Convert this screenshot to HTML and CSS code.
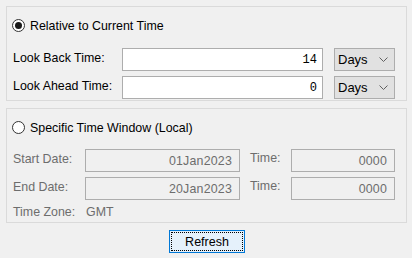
FILE: index.html
```html
<!DOCTYPE html>
<html>
<head>
<meta charset="utf-8">
<link rel="stylesheet" href="styles.css">
</head>
<body>
<div class="window">
  <section class="panel panel-rel">
    <div class="radio-row">
      <span class="radio checked"></span>
      <span class="radio-label">Relative to Current Time</span>
    </div>
    <div class="grid-rel">
      <span class="lbl">Look Back Time:</span>
      <div class="input mono">14</div>
      <div class="select"><span>Days</span><svg width="9" height="5" viewBox="0 0 9 5"><path d="M0.5 0.5 L4.5 4.5 L8.5 0.5" fill="none" stroke="#606060" stroke-width="1"/></svg></div>
      <span class="lbl">Look Ahead Time:</span>
      <div class="input mono">0</div>
      <div class="select"><span>Days</span><svg width="9" height="5" viewBox="0 0 9 5"><path d="M0.5 0.5 L4.5 4.5 L8.5 0.5" fill="none" stroke="#606060" stroke-width="1"/></svg></div>
    </div>
  </section>
  <section class="panel panel-abs">
    <div class="radio-row">
      <span class="radio"></span>
      <span class="radio-label">Specific Time Window (Local)</span>
    </div>
    <div class="grid-abs">
      <span class="lbl dis">Start Date:</span>
      <div class="input disabled">01Jan2023</div>
      <span class="lbl dis tlbl">Time:</span>
      <div class="input disabled">0000</div>
      <span class="lbl dis">End Date:</span>
      <div class="input disabled">20Jan2023</div>
      <span class="lbl dis tlbl">Time:</span>
      <div class="input disabled">0000</div>
    </div>
    <div class="tz"><span class="lbl dis tz-lbl">Time Zone:</span><span class="lbl dis">GMT</span></div>
  </section>
  <div class="actions">
    <button class="btn"><span class="focus">Refresh</span></button>
  </div>
</div>
</body>
</html>
```
FILE: styles.css
```css
html, body {
  margin: 0;
  padding: 0;
  background: #f0f0f0;
  width: 412px;
  height: 258px;
  overflow: hidden;
}
body {
  font-family: "Liberation Sans", Arial, sans-serif;
  font-size: 12.4px;
  color: #000;
}
.window {
  padding: 6px 5px 0 6px;
  display: flex;
  flex-direction: column;
}
.panel {
  border: 1px solid #dadada;
  box-sizing: border-box;
}
.panel-rel {
  height: 95px;
  padding: 0 10px 0 6px;
}
.panel-abs {
  margin-top: 7px;
  height: 115px;
  padding: 0 10px 0 6px;
}
.radio-row {
  display: flex;
  align-items: center;
  height: 37px;
  margin-left: -1px;
}
.radio {
  width: 11px;
  height: 11px;
  border: 1px solid #333;
  border-radius: 50%;
  background: #fff;
  box-sizing: content-box;
  position: relative;
  margin-right: 5px;
}
.radio.checked::after {
  content: "";
  position: absolute;
  left: 2px;
  top: 2px;
  width: 7px;
  height: 7px;
  border-radius: 50%;
  background: #1a1a1a;
}
.radio-label {
  line-height: 14px;
}
.grid-rel {
  display: grid;
  grid-template-columns: 98px 201px 61px;
  column-gap: 11px;
  row-gap: 5px;
  margin-top: 4px;
  align-items: center;
}
.lbl {
  white-space: nowrap;
  line-height: 14px;
  position: relative;
  top: -2px;
}
.lbl.dis { color: #6d6d6d; }
.input {
  height: 23px;
  box-sizing: border-box;
  border: 1px solid #adadad;
  background: #fff;
  display: flex;
  align-items: center;
  justify-content: flex-end;
  padding-right: 5px;
}
.input.mono {
  font-family: "Liberation Mono", "DejaVu Sans Mono", monospace;
  font-size: 12px;
}
.input.disabled {
  background: #f0f0f0;
  color: #6d6d6d;
  padding-right: 7px;
  letter-spacing: 0.2px;
}
.select {
  height: 23px;
  box-sizing: border-box;
  border: 1px solid #adadad;
  background: #e1e1e1;
  display: flex;
  align-items: center;
  justify-content: space-between;
  padding: 0 6px 0 3px;
  font-size: 13px;
}
.select svg { display: block; }
.grid-abs {
  display: grid;
  grid-template-columns: 72px 155px 51px 104px;
  column-gap: 0;
  row-gap: 5px;
  margin-top: 3px;
  align-items: center;
}
.tlbl {
  padding-left: 10px;
  top: -3px;
}
.tz {
  display: flex;
  height: 28px;
  align-items: center;
}
.tz-lbl { width: 73px; }
.actions {
  display: flex;
  justify-content: flex-start;
  padding-left: 163px;
  margin-top: 7px;
}
.btn {
  width: 76px;
  height: 23px;
  box-sizing: border-box;
  border: 1px solid #0078d7;
  background: #e5f1fb;
  padding: 1px;
  font-family: "Liberation Sans", Arial, sans-serif;
  font-size: 12.5px;
  color: #000;
  display: flex;
}
.focus {
  flex: 1;
  border: 1px dotted #000;
  display: flex;
  align-items: center;
  justify-content: center;
}
```
